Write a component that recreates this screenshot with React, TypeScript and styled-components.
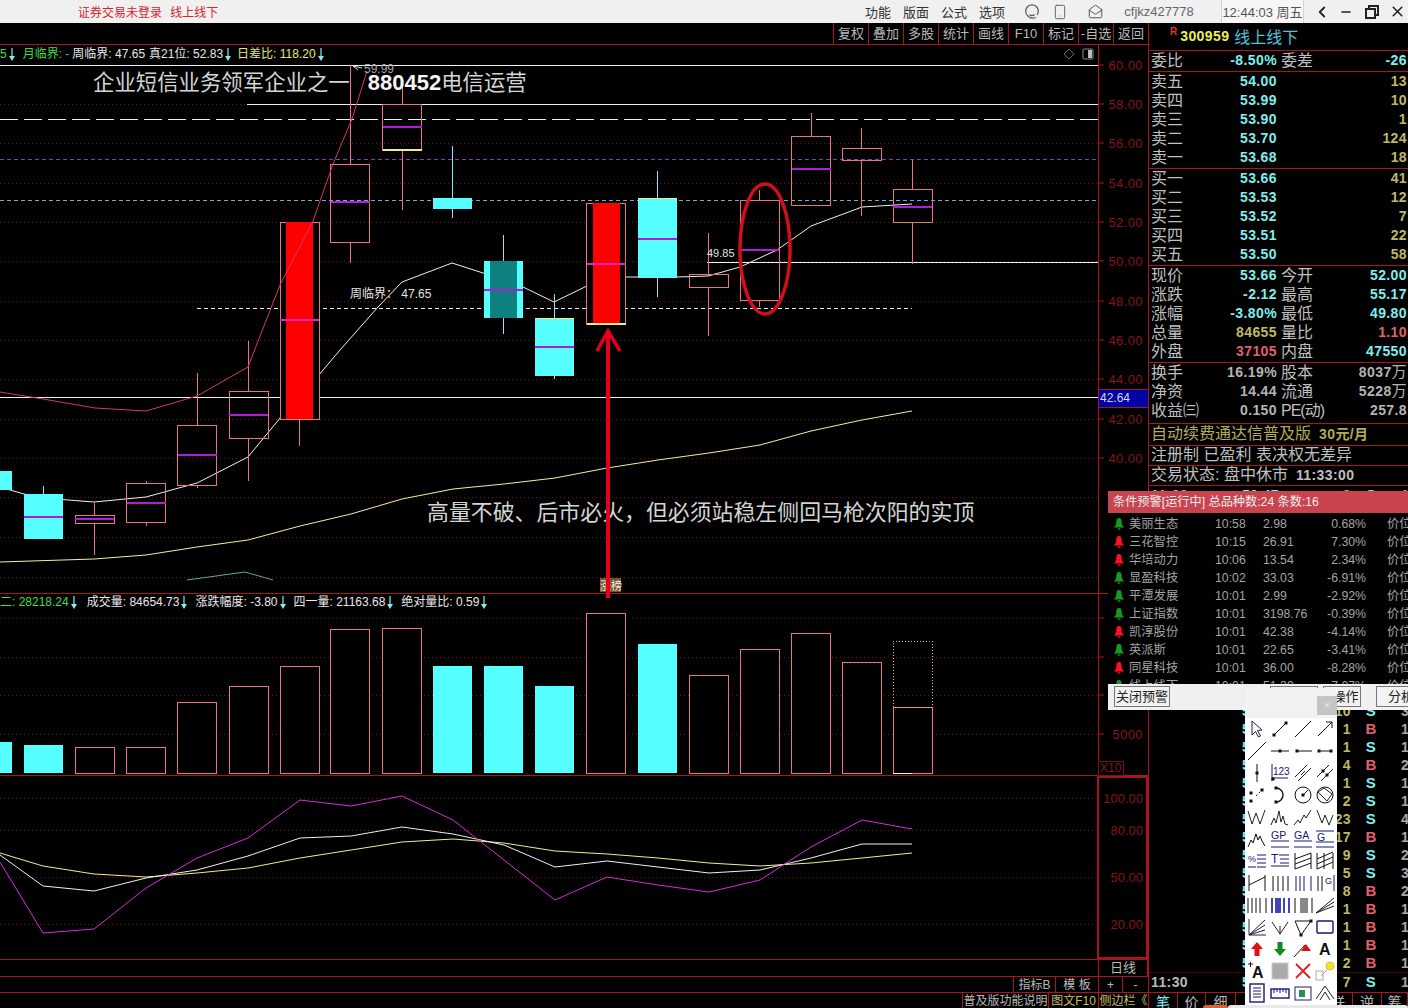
import React from "react";
import styled, { createGlobalStyle } from "styled-components";
import { ChevronLeft, Minus, X, Smartphone, MailOpen } from "lucide-react";

const FONT = `"Liberation Sans", "Noto Sans CJK SC", sans-serif`;
const LINE = "#a8141f";
const GRID = "#74121a";
const PINK = "#e8747e";
const CYAN = "#55ffff";
const QUOTE_CYAN = "#7eeeee";
const QTY = "#bdb965";
const SOFT_RED = "#e4606e";
const GRAY = "#b4b4b4";

const GlobalStyle = createGlobalStyle`
  html, body { margin: 0; background: #000; overflow: hidden; }
  * { box-sizing: border-box; }
`;

/* ---------- data ---------- */

type Candle = {
  x: number;
  top: number;
  bottom: number;
  hi: number;
  lo: number;
  mid?: number;
  kind: "up" | "down" | "teal" | "red";
  edge?: "top" | "bottom";
};

const candles: Candle[] = [
  { x: -8, top: 471, bottom: 490, hi: 471, lo: 490, kind: "down" },
  { x: 43.5, top: 494, bottom: 539, hi: 486, lo: 539, mid: 517, kind: "down" },
  { x: 94.5, top: 515, bottom: 523, hi: 503, lo: 555, mid: 519, kind: "up" },
  { x: 146, top: 483, bottom: 522, hi: 481, lo: 526, mid: 503, kind: "up" },
  { x: 197, top: 425, bottom: 485, hi: 373, lo: 488, mid: 455, kind: "up" },
  { x: 248.5, top: 391, bottom: 438, hi: 341, lo: 481, mid: 415, kind: "up" },
  { x: 299.5, top: 222, bottom: 419, hi: 222, lo: 446, mid: 320, kind: "red" },
  { x: 350, top: 164, bottom: 242, hi: 65, lo: 263, mid: 202, kind: "up" },
  { x: 402, top: 104, bottom: 150, hi: 80, lo: 210, mid: 127, kind: "up", edge: "bottom" },
  { x: 452.5, top: 198, bottom: 209, hi: 146, lo: 218, kind: "down" },
  { x: 503.5, top: 261, bottom: 318, hi: 235, lo: 334, mid: 290, kind: "teal" },
  { x: 554.5, top: 318, bottom: 376, hi: 294, lo: 379, mid: 347, kind: "down", edge: "top" },
  { x: 606, top: 203, bottom: 324, hi: 203, lo: 324, mid: 264, kind: "red", edge: "bottom" },
  { x: 657.5, top: 198, bottom: 278, hi: 171, lo: 297, mid: 239, kind: "down", edge: "top" },
  { x: 708.5, top: 274, bottom: 287, hi: 233, lo: 336, kind: "up" },
  { x: 759.5, top: 200, bottom: 300, hi: 190, lo: 307, mid: 250, kind: "up" },
  { x: 811, top: 136, bottom: 205, hi: 113, lo: 205, mid: 169, kind: "up" },
  { x: 861.5, top: 148, bottom: 160, hi: 128, lo: 216, kind: "up" },
  { x: 912.5, top: 189, bottom: 222, hi: 160, lo: 264, mid: 207, kind: "up" },
];

const whiteMa =
  "0,487 24,494 43,498 94,502 146,497 197,483 248,457 285,412 313,382 340,350 378,307 402,282 452,263 483,273 523,287 554,302 593,283 620,277 677,277 708,276 740,267 777,250 811,226 862,207 912,204";
const pinkMa =
  "0,392 43,399 95,408 146,411 197,396 248,367 280,285 313,221 333,164 352,119 367,71";
const yellowMa =
  "0,562 94,559 146,555 197,547 248,540 300,526 351,514 402,499 453,489 504,484 555,478 607,468 658,460 709,453 760,445 811,431 862,420 912,411";

const priceLabels = [
  ["60.00", 65],
  ["58.00", 104],
  ["56.00", 143],
  ["54.00", 183],
  ["52.00", 222],
  ["50.00", 261],
  ["48.00", 301],
  ["46.00", 340],
  ["44.00", 379],
  ["42.00", 419],
  ["40.00", 458],
] as const;

const volBars = [
  { x: -8, top: 742, fill: true },
  { x: 43.5, top: 745, fill: true },
  { x: 94.5, top: 747 },
  { x: 146, top: 747 },
  { x: 197, top: 702 },
  { x: 248.5, top: 686 },
  { x: 299.5, top: 666 },
  { x: 350, top: 629 },
  { x: 402, top: 628 },
  { x: 452.5, top: 666, fill: true },
  { x: 503.5, top: 666, fill: true },
  { x: 554.5, top: 686, fill: true },
  { x: 606, top: 613 },
  { x: 657.5, top: 644, fill: true },
  { x: 708.5, top: 675 },
  { x: 759.5, top: 649 },
  { x: 811, top: 633 },
  { x: 861.5, top: 662 },
  { x: 912.5, top: 707 },
];

const kdjMagenta =
  "0,862 43,933 94,929 146,888 197,858 248,838 300,800 351,806 402,796 453,820 504,860 555,900 607,877 658,885 709,892 760,880 811,847 862,820 912,829";
const kdjWhite =
  "0,855 43,886 94,891 146,878 197,870 248,856 300,838 351,836 402,827 453,834 504,845 555,867 607,861 658,867 709,873 760,870 811,858 862,844 912,844";
const kdjYellow =
  "0,853 43,866 94,874 146,877 197,873 248,868 300,858 351,850 402,842 453,839 504,843 555,851 607,854 658,858 709,863 760,866 811,863 862,858 912,853";

const sellRows = [
  ["卖五", "54.00", "13"],
  ["卖四", "53.99", "10"],
  ["卖三", "53.90", "1"],
  ["卖二", "53.70", "124"],
  ["卖一", "53.68", "18"],
];
const buyRows = [
  ["买一", "53.66", "41"],
  ["买二", "53.53", "12"],
  ["买三", "53.52", "7"],
  ["买四", "53.51", "22"],
  ["买五", "53.50", "58"],
];

const alerts = [
  ["美丽生态", "10:58", "2.98", "0.68%", "g"],
  ["三花智控", "10:15", "26.91", "7.30%", "r"],
  ["华培动力", "10:06", "13.54", "2.34%", "r"],
  ["显盈科技", "10:02", "33.03", "-6.91%", "g"],
  ["平潭发展", "10:01", "2.99", "-2.92%", "g"],
  ["上证指数", "10:01", "3198.76", "-0.39%", "g"],
  ["凯淳股份", "10:01", "42.38", "-4.14%", "r"],
  ["英派斯", "10:01", "22.65", "-3.41%", "g"],
  ["同星科技", "10:01", "36.00", "-8.28%", "r"],
  ["线上线下", "10:01", "51.39", "-7.07%", "g"],
];

const ticks: [string, "B" | "S", string][] = [
  ["8", "S", "1"], ["3", "B", "1"], ["5", "S", "2"], ["2", "B", "1"],
  ["9", "S", "1"], ["1", "B", "1"], ["4", "S", "2"], ["6", "B", "1"],
  ["2", "S", "1"], ["7", "B", "3"], ["1", "S", "1"], ["3", "S", "2"],
  ["10", "S", "3"], ["1", "B", "1"], ["1", "S", "1"], ["4", "B", "2"],
  ["1", "S", "1"], ["2", "S", "1"], ["23", "S", "4"], ["17", "B", "1"],
  ["9", "S", "2"], ["5", "S", "3"], ["8", "B", "2"], ["1", "B", "1"],
  ["1", "B", "1"], ["1", "B", "1"], ["2", "B", "1"], ["7", "S", "1"],
];

/* ---------- toolbox icons ---------- */

const dot = (x: number, y: number) => (
  <rect x={x - 1.5} y={y - 1.5} width={3} height={3} fill="#111" stroke="none" />
);

const label = (x: number, y: number, t: string, size = 10.5) => (
  <text x={x} y={y} fontSize={size} fill="#16167a" stroke="none">
    {t}
  </text>
);

const toolIcons: React.ReactNode[] = [
  <path d="M5 2V16L8.5 12.5 11.5 18 13.5 17 10.5 11.5 15 11Z" stroke="#223" />,
  <><path d="M4 16L16 4" stroke="#111" />{dot(4, 16)}{dot(16, 4)}</>,
  <path d="M2 18L18 2" stroke="#111" />,
  <path d="M3 17L17 3M11 3H17V9" stroke="#111" />,
  <path d="M1 19L19 1" stroke="#111" />,
  <><path d="M1 10H19" stroke="#111" />{dot(10, 10)}</>,
  <><path d="M3 10H19" stroke="#111" />{dot(4, 10)}</>,
  <><path d="M3 10H17" stroke="#111" />{dot(4, 10)}{dot(16, 10)}</>,
  <><path d="M10 1V19" stroke="#111" />{dot(10, 10)}</>,
  <><path d="M2 15H18M2 1V18" />{label(3, 12, "123", 10)}{dot(3, 16)}</>,
  <path d="M2 14L14 2M5 18L18 5M8 12L12 8" stroke="#222" />,
  <><path d="M2 14L14 2M6 18L18 6" stroke="#222" />{dot(8, 8)}{dot(12, 12)}</>,
  <><path d="M9 11L17 3" stroke="#111" strokeDasharray="2 2" />{dot(4, 16)}{dot(15, 5)}{dot(4, 8)}</>,
  <><path d="M6 3A7 7 0 0 1 6 17" stroke="#111" strokeWidth={1.4} />{dot(6, 3)}{dot(6, 17)}</>,
  <><circle cx={10} cy={10} r={8} stroke="#111" /><path d="M10 10L15 5" stroke="#111" />{dot(10, 10)}</>,
  <><circle cx={10} cy={10} r={8} stroke="#111" /><path d="M3 7L9 3 17 9 12 16Z" stroke="#224" /></>,
  <path d="M1 4L5 17 9 6 13 17 18 3" stroke="#222" />,
  <path d="M1 18L4 11 6 16 9 4 11 15 13 9 15 17 18 18" stroke="#222" />,
  <path d="M1 18L5 13 7 16 11 8 13 11 18 3" stroke="#222" />,
  <path d="M2 3L7 16 10 8 14 18 18 8" stroke="#222" />,
  <path d="M1 18L4 11 6 14 9 5 11 11 13 7 15 12 18 17" stroke="#111" />,
  <><path d="M1 12H19M1 18H19" />{label(1, 10, "GP")}</>,
  <><path d="M1 12H19M1 18H19" />{label(1, 10, "GA")}</>,
  <><path d="M1 13H19M1 18H19M1 2H19" />{label(2, 12, "G")}</>,
  <><path d="M10 4H19M10 8H19M10 12H19M10 16H19M1 16H9" />{label(1, 11, "%", 9)}</>,
  <><path d="M9 4H19M10 8H19M10 12H19M1 15H19" />{label(1, 12, "T", 12)}</>,
  <path d="M2 2V18M18 2V18M2 8L18 2M2 13L18 7M2 18L18 12" stroke="#111" />,
  <path d="M2 2V18M9 2V18M18 2V18M2 8L18 1M2 13L18 6M2 18L18 11" stroke="#111" />,
  <path d="M2 2V18M18 2V18M2 12L18 4" stroke="#111" />,
  <path d="M3 3V18M8 3V18M13 3V18M18 3V18" stroke="#111" />,
  <path d="M3 3V18M7 3V18M11 3V18M18 3V18" />,
  <><path d="M3 3V18M7 3V18" stroke="#111" />{label(10, 11, "G", 9)}<path d="M19 2V18" /></>,
  <path d="M1 3V18M5 3V18M9 3V18M13 3V18M19 3V18" stroke="#111" />,
  <path d="M2 3V18M6 3V18M8 3V18M10 3V18M14 3V18M19 3V18" stroke="#1616a8" strokeWidth={1.6} />,
  <path d="M2 3V18M8 3V18M10 3V18M12 3V18M14 3V18M19 3V18" stroke="#111" />,
  <path d="M1 18L19 3M1 18L19 7M1 18L19 11" stroke="#223" />,
  <path d="M2 2V18H19M2 18L18 3M2 18L18 8M2 18L18 13" stroke="#224" />,
  <path d="M10 17L2 5M10 17L18 5M10 17V9" stroke="#222" />,
  <><path d="M2 4H18L8 18Z" stroke="#111" />{dot(18, 4)}{dot(8, 18)}</>,
  <rect x={2} y={4} width={16} height={12} rx={1} stroke="#16167a" strokeWidth={1.4} />,
  <path d="M10 3L16 10H12.5V17H7.5V10H4Z" fill="#e01010" stroke="none" />,
  <path d="M10 17L16 10H12.5V3H7.5V10H4Z" fill="#108a20" stroke="none" />,
  <><path d="M1 18L12 6" stroke="#111" /><path d="M13 5L18 12H8Z" fill="#e01010" stroke="none" /></>,
  <text x={4} y={16} fontSize={16} fontWeight={700} fill="#111" stroke="none">A</text>,
  <><text x={5} y={17} fontSize={16} fontWeight={700} fill="#111" stroke="none">A</text><path d="M1 3H6M3.5 1V6" stroke="#111" /></>,
  <><rect x={2} y={2} width={16} height={16} fill="#aaa" stroke="#ccc" /><rect x={4} y={4} width={12} height={12} fill="#aaa" stroke="none" /></>,
  <path d="M3 3L17 17M17 3L3 17" stroke="#e02020" strokeWidth={1.8} />,
  <><rect x={1} y={10} width={7} height={9} stroke="#aaa" /><path d="M6 15L13 8" stroke="#aaa" /><circle cx={15} cy={5} r={4} fill="#f4e03a" stroke="#dcc020" /></>,
  <><rect x={3} y={1} width={14} height={18} stroke="#16167a" strokeWidth={1.4} /><path d="M6 5H14M6 8H14M6 11H14M6 14H14" /></>,
  <><rect x={1} y={6} width={18} height={9} stroke="#16167a" strokeWidth={1.4} /><path d="M4 6V10M7 6V9M10 6V10M13 6V9M16 6V10" /></>,
  <><rect x={2} y={4} width={16} height={13} stroke="#226" /><rect x={6} y={7} width={6} height={7} fill="#2a8a5a" stroke="none" /></>,
  <path d="M1 16L10 3 19 16M5 17L10 9 15 17" stroke="#222" />,
];

/* ---------- layout ---------- */

const Page = styled.div`
  position: relative;
  width: 1408px;
  height: 1008px;
  overflow: hidden;
  background: #000;
  font-family: ${FONT};
`;

const TitleBar = styled.header`
  display: flex;
  align-items: center;
  height: 23px;
  background: #f0f0f0;
  color: #444;
  font-size: 13px;
`;

const AppTitle = styled.span`
  margin-left: 78px;
  color: #d8242c;
  font-size: 12px;
  word-spacing: 5px;
  margin-right: auto;
`;

const MenuGroup = styled.div`
  display: flex;
  margin-right: 7px;
`;

const MenuItem = styled.span`
  width: 38px;
  text-align: center;
  color: #333;
`;

const BarButton = styled.span<{ $w: number }>`
  display: flex;
  align-items: center;
  justify-content: center;
  width: ${(p) => p.$w}px;
  height: 100%;
  color: #444;
`;

const UserName = styled.span`
  width: 106px;
  padding-right: 18px;
  text-align: center;
  color: #666;
  font-size: 13px;
`;

const Clock = styled.span`
  display: flex;
  align-items: center;
  justify-content: center;
  width: 83px;
  height: 100%;
  background: #f6f6f6;
  border-left: 1px solid #d4d4d4;
  border-right: 1px solid #d4d4d4;
  color: #555;
  white-space: nowrap;
  margin-right: 6px;
`;

const Body = styled.div`
  display: grid;
  grid-template-columns: 1148px 260px;
  height: 985px;
`;

const LeftColumn = styled.section`
  display: flex;
  flex-direction: column;
  min-width: 0;
`;

const Toolbar = styled.nav`
  display: flex;
  justify-content: flex-end;
  height: 22px;
  border-bottom: 1px solid ${LINE};
`;

const ToolButton = styled.span`
  width: 35px;
  border-left: 1px solid ${LINE};
  color: #b9b9b9;
  font-size: 13px;
  line-height: 21px;
  text-align: center;
  white-space: nowrap;
`;

const Pane = styled.div<{ $h: number }>`
  position: relative;
  height: ${(p) => p.$h}px;
  overflow: hidden;
`;

const ChartSvg = styled.svg`
  display: block;
  font-family: ${FONT};
`;

const Legend = styled.div`
  position: absolute;
  top: 1px;
  left: 0;
  display: flex;
  gap: 6px;
  height: 16px;
  line-height: 16px;
  font-size: 12px;
  color: #e8e8e8;
  white-space: nowrap;
`;

const LegendItem = styled.span<{ $color?: string; $push?: number }>`
  color: ${(p) => p.$color ?? "#e8e8e8"};
  margin-left: ${(p) => p.$push ?? 0}px;
`;

const DownMark = styled.svg`
  display: inline-block;
  width: 10px;
  height: 13px;
  margin-bottom: -3px;
`;

const TimeRow = styled.div`
  display: flex;
  justify-content: flex-end;
  height: 17px;
  border-top: 1px solid ${LINE};
`;

const ControlRow = styled(TimeRow)`
  height: 16px;
`;

const FootRow = styled(TimeRow)`
  height: 16px;
`;

const FootCell = styled.span<{ $w: number; $tone?: "gold" }>`
  width: ${(p) => p.$w}px;
  border-left: 1px solid ${LINE};
  color: ${(p) => (p.$tone === "gold" ? "#c4bc62" : "#b9b9b9")};
  font-size: 12px;
  line-height: 16px;
  text-align: center;
  white-space: nowrap;
  overflow: hidden;
`;

const AxisCell = styled(FootCell)`
  border-right: 1px solid ${LINE};
  font-size: 13px;
`;

/* ---------- right column ---------- */

const RightColumn = styled.aside`
  display: flex;
  flex-direction: column;
  border-left: 1px solid ${LINE};
  min-width: 0;
`;

const StockHead = styled.div`
  display: flex;
  align-items: center;
  height: 28px;
  padding: 0 0 2px 21px;
  border-bottom: 1px solid ${LINE};
`;

const Badge = styled.sup`
  color: #e03030;
  font-size: 10px;
  font-weight: 700;
  margin: -8px 3px 0 0;
  line-height: 1;
`;

const StockCode = styled.span`
  color: #eded5a;
  font-size: 14px;
  font-weight: 700;
  letter-spacing: 0.4px;
  margin-right: 5px;
`;

const StockName = styled.span`
  color: #52c4dc;
  font-size: 16px;
`;

const QuoteBlock = styled.div<{ $pb?: number }>`
  padding: 1px 0 ${(p) => p.$pb ?? 0}px 0;
  border-bottom: 1px solid ${LINE};
`;

const QuoteRow = styled.div`
  display: grid;
  grid-template-columns: 126px 126px;
  grid-template-rows: 19px;
  column-gap: 4px;
  height: 19px;
  padding-left: 2px;
`;

const QuoteHalf = styled.div`
  display: flex;
  justify-content: space-between;
  align-items: center;
  height: 19px;
  padding-bottom: 3px;
  white-space: nowrap;
  min-width: 0;
`;

const QuoteLabel = styled.span<{ $tight?: boolean }>`
  color: #bfbfbf;
  font-size: 16px;
  line-height: 16px;
  margin-top: 1px;
  letter-spacing: ${(p) => (p.$tight ? "-1px" : "0")};
`;

const QuoteValue = styled.span<{ $color?: string }>`
  color: ${(p) => p.$color ?? QUOTE_CYAN};
  font-size: 14px;
  line-height: 16px;
  font-weight: 700;
  letter-spacing: 0.4px;
`;

const Unit = styled.span`
  font-size: 15px;
  font-weight: 400;
`;

const NoticeRow = styled.div<{ $h: number; $tone?: "gold" }>`
  display: flex;
  align-items: center;
  gap: 8px;
  height: ${(p) => p.$h}px;
  padding: 0 0 2px 2px;
  border-bottom: 1px solid ${LINE};
  color: ${(p) => (p.$tone === "gold" ? "#b4aa58" : "#bfbfbf")};
  font-size: 16px;
  line-height: 16px;
  white-space: nowrap;
`;

const NoticeStrong = styled.b`
  font-size: 14px;
  letter-spacing: 0.4px;
`;

const TickList = styled.div`
  flex: 1;
  min-height: 0;
  overflow: hidden;
`;

const TickRow = styled.div<{ $rule?: boolean }>`
  display: grid;
  grid-template-columns: 91px 60px 49px 40px 1fr;
  grid-template-rows: 17px;
  align-items: center;
  height: 18px;
  padding-left: 2px;
  font-size: 14px;
  line-height: 16px;
  font-weight: 700;
  letter-spacing: 0.4px;
  border-top: ${(p) => (p.$rule ? `1px dotted ${GRID}` : "0")};
`;

const TickTime = styled.span`
  color: #b9b9b9;
`;

const TickPrice = styled.span`
  color: ${QUOTE_CYAN};
`;

const TickVol = styled.span`
  color: ${QTY};
  text-align: right;
`;

const TickFlag = styled.span<{ $side: "B" | "S" }>`
  color: ${(p) => (p.$side === "B" ? SOFT_RED : QUOTE_CYAN)};
  text-align: center;
  font-size: 15px;
`;

const TickLast = styled.span`
  color: #a6a6a6;
  padding-left: 10px;
`;

const TabBar = styled.div`
  display: flex;
  height: 16px;
  border-top: 1px solid ${LINE};
`;

const Tab = styled.span<{ $active?: boolean; $w: number }>`
  width: ${(p) => p.$w}px;
  border-right: 1px solid ${LINE};
  color: ${(p) => (p.$active ? QUOTE_CYAN : "#b9b9b9")};
  font-size: 14px;
  line-height: 18px;
  text-align: center;
  overflow: hidden;
`;

/* ---------- things lying over the page ---------- */

const Overlay = styled.svg`
  position: absolute;
  inset: 0;
  pointer-events: none;
`;

const Caption = styled.div<{ $x: number; $y: number; $size: number }>`
  position: absolute;
  left: ${(p) => p.$x}px;
  top: ${(p) => p.$y}px;
  color: #d4d4d4;
  font-size: ${(p) => p.$size}px;
  line-height: 26px;
  white-space: nowrap;
  font-family: "Noto Sans CJK SC", sans-serif;
`;

const CaptionCode = styled.b`
  color: #f4f4f4;
  font-family: "Liberation Sans", sans-serif;
  font-size: 22px;
  margin: 0 0 0 18px;
`;

const AlertDialog = styled.div`
  position: absolute;
  left: 1108px;
  top: 491px;
  width: 300px;
  height: 219px;
  display: flex;
  flex-direction: column;
  background: #000;
  overflow: hidden;
`;

const AlertHead = styled.div`
  flex: none;
  height: 22px;
  padding-left: 5px;
  background: #c8444f;
  color: #ececec;
  font-size: 12.2px;
  line-height: 22px;
  white-space: nowrap;
`;

const AlertBody = styled.div`
  flex: 1;
  min-height: 0;
  padding-top: 2px;
  overflow: hidden;
`;

const AlertRow = styled.div`
  display: grid;
  grid-template-columns: 16px 86px 48px 58px 45px 1fr;
  grid-template-rows: 18px;
  align-items: center;
  height: 18px;
  padding-left: 5px;
  color: #a4a4a4;
  font-size: 12.3px;
  line-height: 16px;
  white-space: nowrap;
`;

const AlertPct = styled.span`
  text-align: right;
`;

const AlertKind = styled.span`
  padding-left: 21px;
`;

const AlertFoot = styled.div`
  position: relative;
  flex: none;
  height: 26px;
  background: #f0f0f0;
`;

const DialogButton = styled.span<{ $x: number; $w: number; $indent?: number }>`
  position: absolute;
  left: ${(p) => p.$x}px;
  top: 2px;
  width: ${(p) => p.$w}px;
  height: 21px;
  padding-left: ${(p) => p.$indent ?? 0}px;
  border: 1px solid #777;
  background: #f2f2f2;
  color: #222;
  font-size: 13px;
  line-height: 19px;
  text-align: center;
  white-space: nowrap;
  overflow: hidden;
`;

const Toolbox = styled.div`
  position: absolute;
  left: 1245px;
  top: 688px;
  width: 92px;
  height: 318px;
  background: #fff;
`;

const ToolboxHead = styled.div`
  display: flex;
  justify-content: flex-end;
  align-items: flex-start;
  height: 30px;
  padding-top: 8px;
  background: #f2f2f2;
`;

const CloseBox = styled.span`
  width: 20px;
  height: 19px;
  background: #c4c4c4;
  color: #e8e8e8;
  font-size: 11px;
  line-height: 19px;
  text-align: center;
`;

const ToolGrid = styled.div`
  display: grid;
  grid-template-columns: repeat(4, 22.7px);
  grid-auto-rows: 22px;
  justify-items: center;
  align-items: center;
  padding-left: 1px;
`;

const ToolIcon = styled.svg`
  width: 20px;
  height: 20px;
  fill: none;
  stroke: #16167a;
  stroke-width: 1;
  font-family: "Liberation Sans", sans-serif;
`;

const TrayEdge = styled.span`
  position: absolute;
  left: 1228px;
  top: 1005px;
  width: 180px;
  height: 3px;
  background: #e9e9e9;
  border-radius: 4px 4px 0 0;
`;

const TrayTab = styled.span`
  position: absolute;
  left: 1203px;
  top: 1005px;
  width: 25px;
  height: 3px;
  background: #d8632e;
  border-radius: 3px 3px 0 0;
`;

/* ---------- pieces ---------- */

const Down = () => (
  <DownMark viewBox="0 0 10 13">
    <path d="M5 0V10" stroke={QUOTE_CYAN} strokeWidth={1.2} />
    <path d="M2 8H8L5 13Z" fill={QUOTE_CYAN} />
  </DownMark>
);

const BellIcon = ({ tone }: { tone: string }) => (
  <svg width="12" height="14" viewBox="0 0 12 13">
    <path
      d="M6 .5C4 .5 3.4 2 3.4 4 3.4 7 2.5 8.4 .8 10H11.2C9.5 8.4 8.6 7 8.6 4 8.6 2 8 .5 6 .5ZM4.5 10.8a1.5 1.5 0 0 0 3 0Z"
      fill={tone === "r" ? "#ff1020" : "#189a1c"}
    />
  </svg>
);

const RingIcon = () => (
  <svg width="18" height="18" viewBox="0 0 18 18" fill="none" stroke="#555" strokeWidth="1.2">
    <path d="M4 12A6.3 6.3 0 1 1 14 12" />
    <path d="M4 12C6 15 10 15.5 13 14.5" />
    <path d="M6.5 11.5A3.5 3.5 0 0 0 11.5 11.5" />
  </svg>
);

const RestoreIcon = () => (
  <svg width="14" height="14" viewBox="0 0 14 14" fill="none" stroke="#222" strokeWidth="2">
    <rect x="1" y="4" width="9" height="9" />
    <path d="M4 3V1H13V10H11" />
  </svg>
);

const CandleMark = ({ c }: { c: Candle }) => {
  const left = c.x - 19.5;
  const filled = c.kind === "down" || c.kind === "teal";
  const wick = filled ? "#9df" : PINK;
  const edgeY = c.edge === "top" ? c.top : c.bottom;
  return (
    <g shapeRendering="crispEdges">
      <line x1={c.x} x2={c.x} y1={c.hi} y2={c.top} stroke={wick} />
      <line x1={c.x} x2={c.x} y1={c.bottom} y2={c.lo} stroke={wick} />
      {filled && <rect x={left} y={c.top} width={39} height={c.bottom - c.top} fill={CYAN} />}
      {c.kind === "teal" && (
        <rect x={left + 6} y={c.top} width={27} height={c.bottom - c.top} fill="#0d8080" />
      )}
      {c.kind === "up" && (
        <rect x={left} y={c.top} width={39} height={c.bottom - c.top} fill="#000" fillOpacity={0} stroke={PINK} />
      )}
      {c.kind === "red" && (
        <>
          <rect x={left} y={c.top} width={39} height={c.bottom - c.top} fill="#000" stroke={PINK} />
          <rect x={left + 6} y={c.top} width={27} height={c.bottom - c.top} fill="#ff0000" />
        </>
      )}
      {c.mid && (
        <line x1={left} x2={left + 39} y1={c.mid} y2={c.mid} stroke={c.kind === "red" ? "#e820c8" : "#b01cd8"} strokeWidth={1.4} />
      )}
      {c.edge && (
        <line x1={left} x2={left + 39} y1={edgeY} y2={edgeY} stroke="#f4ee80" strokeWidth={c.edge === "top" ? 1 : 2} />
      )}
    </g>
  );
};

const GridLine = ({ y, from = 0 }: { y: number; from?: number }) => (
  <line x1={from} x2={1098} y1={y} y2={y} stroke={GRID} strokeDasharray="1 3" shapeRendering="crispEdges" />
);

const AxisText = ({ y, children }: { y: number; children: string }) => (
  <>
    <line x1={1098} x2={1104} y1={y} y2={y} stroke={LINE} />
    <text x={1143} y={y + 5} textAnchor="end" fontSize={13} fill="#86141c" letterSpacing={0.4}>
      {children}
    </text>
  </>
);

const MainChart = () => (
  <ChartSvg width={1148} height={548} viewBox="0 45 1148 548">
    {priceLabels.map(([t, y]) => (
      <GridLine key={t} y={y} />
    ))}
    <GridLine y={497} />
    <GridLine y={537} />
    <GridLine y={577} />
    <g shapeRendering="crispEdges">
      <line x1={0} x2={1098} y1={65} y2={65} stroke="#f0f0f0" />
      <line x1={247} x2={1098} y1={104} y2={104} stroke="#f0f0f0" />
      <line x1={0} x2={1098} y1={119} y2={119} stroke="#f0f0f0" strokeDasharray="18 6" />
      <line x1={0} x2={1098} y1={159} y2={159} stroke="#8a3ac0" strokeDasharray="4 3" />
      <line x1={0} x2={1098} y1={200} y2={200} stroke="#7aa8d0" strokeDasharray="4 3" />
      <line x1={707} x2={1098} y1={262} y2={262} stroke="#f0f0f0" />
      <line x1={197} x2={912} y1={308} y2={308} stroke="#f0f0f0" strokeDasharray="4 3" />
      <line x1={0} x2={1098} y1={397} y2={397} stroke="#f0f0f0" />
    </g>
    <polyline points={yellowMa} fill="none" stroke="#f2f0a0" />
    <polyline points={whiteMa} fill="none" stroke="#f0f0f0" />
    <polyline points="187,580 245,572 273,580" fill="none" stroke="#5aa8a8" />
    {candles.map((c) => (
      <CandleMark key={c.x} c={c} />
    ))}
    <polyline points={pinkMa} fill="none" stroke="#d03a64" />
    <polyline points="358,70 353,66 362,68" fill="none" stroke="#ddd" />
    <text x={364} y={73} fontSize={12} fill="#aaa">59.99</text>
    <text x={350} y={298} fontSize={12} fill="#e4e4e4">周临界： 47.65</text>
    <text x={707} y={257} fontSize={11} fill="#e4e4e4">49.85</text>
    <path d="M1069 49L1074 54 1069 59 1064 54Z" fill="none" stroke="#666" />
    <rect x={1083} y={49} width={10} height={10} rx={1} fill="none" stroke="#888" />
    <rect x={1088} y={50} width={4} height={8} fill="#bbb" />
    <g shapeRendering="crispEdges">
      <line x1={1098} x2={1098} y1={45} y2={593} stroke={LINE} />
      <rect x={1098} y={389} width={50} height={18} fill="#0000a8" stroke={LINE} />
    </g>
    {priceLabels.map(([t, y]) => (
      <AxisText key={t} y={y}>{t}</AxisText>
    ))}
    <text x={1100} y={402} fontSize={12} fill="#d8d8f0">42.64</text>
    <rect x={600} y={578} width={21} height={14} fill="#7a5424" />
    <text x={600} y={590} fontSize={11} fill="#eee">涨榜</text>
  </ChartSvg>
);

const VolumeChart = () => (
  <ChartSvg width={1148} height={183} viewBox="0 593 1148 183">
    <GridLine y={618} />
    <GridLine y={657} />
    <GridLine y={695} />
    <GridLine y={734} />
    <g shapeRendering="crispEdges">
      {volBars.map((b) =>
        b.fill ? (
          <rect key={b.x} x={b.x - 19.5} y={b.top} width={39} height={773 - b.top} fill={CYAN} />
        ) : (
          <rect key={b.x} x={b.x - 19.5} y={b.top} width={39} height={773 - b.top} fill="#000" stroke={PINK} />
        ),
      )}
      <line x1={893} x2={912} y1={773} y2={773} stroke="#f0f0f0" />
      <rect x={893} y={641} width={39} height={66} fill="none" stroke="#d8c080" strokeDasharray="1 2" />
      <line x1={0} x2={1148} y1={593.5} y2={593.5} stroke={LINE} />
      <line x1={1098} x2={1098} y1={593} y2={776} stroke={LINE} />
      <line x1={0} x2={1148} y1={775.5} y2={775.5} stroke={LINE} />
      <rect x={1098} y={761} width={25} height={14} fill="none" stroke={GRID} />
    </g>
    <AxisText y={618}>{""}</AxisText>
    <AxisText y={657}>{""}</AxisText>
    <AxisText y={695}>{""}</AxisText>
    <AxisText y={734}>5000</AxisText>
    <text x={1100} y={772} fontSize={12} fill="#86141c">X10</text>
  </ChartSvg>
);

const KdjChart = () => (
  <ChartSvg width={1148} height={183} viewBox="0 776 1148 183">
    <GridLine y={798} />
    <GridLine y={830} />
    <GridLine y={877} />
    <GridLine y={924} />
    <polyline points={kdjYellow} fill="none" stroke="#eeee90" />
    <polyline points={kdjWhite} fill="none" stroke="#f0f0f0" />
    <polyline points={kdjMagenta} fill="none" stroke="#d030d8" />
    <rect x={1098} y={777} width={49} height={181} fill="none" stroke={LINE} strokeWidth={2} shapeRendering="crispEdges" />
    <text x={1143} y={803} textAnchor="end" fontSize={13} fill="#86141c">100.00</text>
    <text x={1143} y={835} textAnchor="end" fontSize={13} fill="#86141c">80.00</text>
    <text x={1143} y={882} textAnchor="end" fontSize={13} fill="#86141c">50.00</text>
    <text x={1143} y={929} textAnchor="end" fontSize={13} fill="#86141c">20.00</text>
  </ChartSvg>
);

const QuoteLine = ({
  a,
  av,
  ac,
  b,
  bv,
  bc,
  tight,
}: {
  a: string;
  av: React.ReactNode;
  ac?: string;
  b?: string;
  bv: React.ReactNode;
  bc?: string;
  tight?: boolean;
}) => (
  <QuoteRow>
    <QuoteHalf>
      <QuoteLabel>{a}</QuoteLabel>
      <QuoteValue $color={ac}>{av}</QuoteValue>
    </QuoteHalf>
    <QuoteHalf>
      <QuoteLabel $tight={tight}>{b}</QuoteLabel>
      <QuoteValue $color={bc}>{bv}</QuoteValue>
    </QuoteHalf>
  </QuoteRow>
);

export default function App() {
  return (
    <Page>
      <GlobalStyle />
      <TitleBar>
        <AppTitle>证券交易未登录 线上线下</AppTitle>
        <MenuGroup>
          <MenuItem>功能</MenuItem>
          <MenuItem>版面</MenuItem>
          <MenuItem>公式</MenuItem>
          <MenuItem>选项</MenuItem>
        </MenuGroup>
        <BarButton $w={27}><RingIcon /></BarButton>
        <BarButton $w={30}><Smartphone size={16} strokeWidth={1.2} /></BarButton>
        <BarButton $w={40}><MailOpen size={15} strokeWidth={1.4} /></BarButton>
        <UserName>cfjkz427778</UserName>
        <Clock>12:44:03 周五</Clock>
        <BarButton $w={24}><ChevronLeft size={18} strokeWidth={2.4} color="#222" /></BarButton>
        <BarButton $w={24}><Minus size={14} strokeWidth={2.6} color="#222" /></BarButton>
        <BarButton $w={28}><RestoreIcon /></BarButton>
        <BarButton $w={22}><X size={17} strokeWidth={2.2} color="#222" /></BarButton>
      </TitleBar>

      <Body>
        <LeftColumn>
          <Toolbar>
            {["复权", "叠加", "多股", "统计", "画线", "F10", "标记", "-自选", "返回"].map((t) => (
              <ToolButton key={t}>{t}</ToolButton>
            ))}
          </Toolbar>

          <Pane $h={548}>
            <MainChart />
            <Legend>
              <LegendItem $color="#44dd44">5<Down /></LegendItem>
              <LegendItem $color="#44dd44">月临界: -</LegendItem>
              <LegendItem $push={-3}>周临界: 47.65</LegendItem>
              <LegendItem $push={-2}>真21位: 52.83<Down /></LegendItem>
              <LegendItem $color="#e8e878" $push={-2}>日差比: 118.20<Down /></LegendItem>
            </Legend>
          </Pane>

          <Pane $h={183}>
            <VolumeChart />
            <Legend>
              <LegendItem $color="#44dd44">二: 28218.24<Down /></LegendItem>
              <LegendItem $push={2}>成交量: 84654.73<Down /></LegendItem>
              <LegendItem>涨跌幅度: -3.80<Down /></LegendItem>
              <LegendItem>四一量: 21163.68<Down /></LegendItem>
              <LegendItem>绝对量比: 0.59<Down /></LegendItem>
            </Legend>
          </Pane>

          <Pane $h={183}>
            <KdjChart />
          </Pane>

          <TimeRow>
            <AxisCell $w={50}>日线</AxisCell>
          </TimeRow>
          <ControlRow>
            <FootCell $w={42}>指标B</FootCell>
            <FootCell $w={43}>模 板</FootCell>
            <FootCell $w={24}>+</FootCell>
            <FootCell $w={26}>-</FootCell>
          </ControlRow>
          <FootRow>
            <FootCell $w={86}>普及版功能说明</FootCell>
            <FootCell $w={50} $tone="gold">图文F10</FootCell>
            <FootCell $w={50} $tone="gold">侧边栏《</FootCell>
          </FootRow>
        </LeftColumn>

        <RightColumn>
          <StockHead>
            <Badge>R</Badge>
            <StockCode>300959</StockCode>
            <StockName>线上线下</StockName>
          </StockHead>
          <QuoteBlock>
            <QuoteLine a="委比" av="-8.50%" b="委差" bv="-26" />
          </QuoteBlock>
          <QuoteBlock>
            {sellRows.map(([l, p, q]) => (
              <QuoteLine key={l} a={l} av={p} bv={q} bc={QTY} />
            ))}
          </QuoteBlock>
          <QuoteBlock>
            {buyRows.map(([l, p, q]) => (
              <QuoteLine key={l} a={l} av={p} bv={q} bc={QTY} />
            ))}
          </QuoteBlock>
          <QuoteBlock>
            <QuoteLine a="现价" av="53.66" b="今开" bv="52.00" />
            <QuoteLine a="涨跌" av="-2.12" b="最高" bv="55.17" />
            <QuoteLine a="涨幅" av="-3.80%" b="最低" bv="49.80" />
            <QuoteLine a="总量" av="84655" ac={QTY} b="量比" bv="1.10" bc={SOFT_RED} />
            <QuoteLine a="外盘" av="37105" ac={SOFT_RED} b="内盘" bv="47550" />
          </QuoteBlock>
          <QuoteBlock $pb={2}>
            <QuoteLine a="换手" av="16.19%" ac={GRAY} b="股本" bv={<>8037<Unit>万</Unit></>} bc={GRAY} />
            <QuoteLine a="净资" av="14.44" ac={GRAY} b="流通" bv={<>5228<Unit>万</Unit></>} bc={GRAY} />
            <QuoteLine a="收益㈢" av="0.150" ac={GRAY} b="PE(动)" tight bv="257.8" bc={GRAY} />
          </QuoteBlock>
          <NoticeRow $h={22} $tone="gold">
            自动续费通达信普及版 <NoticeStrong>30元/月</NoticeStrong>
          </NoticeRow>
          <NoticeRow $h={20}>注册制 已盈利 表决权无差异</NoticeRow>
          <NoticeRow $h={20}>
            交易状态: 盘中休市 <NoticeStrong>11:33:00</NoticeStrong>
          </NoticeRow>
          <TickList>
            {ticks.map(([v, f, l], i) => {
              const last = i === ticks.length - 1;
              return (
                <TickRow key={i} $rule={last}>
                  <TickTime>{i === 0 || last ? "11:30" : ""}</TickTime>
                  <TickPrice>53.47</TickPrice>
                  <TickVol>{v}</TickVol>
                  <TickFlag $side={f}>{f}</TickFlag>
                  <TickLast>{l}</TickLast>
                </TickRow>
              );
            })}
          </TickList>
          <TabBar>
            <Tab $w={29} $active>笔</Tab>
            <Tab $w={28}>价</Tab>
            <Tab $w={30}>细</Tab>
            <Tab $w={30}>主</Tab>
            <Tab $w={30}>分</Tab>
            <Tab $w={28}>势</Tab>
            <Tab $w={29}>联</Tab>
            <Tab $w={29}>逆</Tab>
            <Tab $w={26}>筹</Tab>
          </TabBar>
        </RightColumn>
      </Body>

      <Caption $x={93} $y={68} $size={21.4}>
        企业短信业务领军企业之一<CaptionCode>880452</CaptionCode>电信运营
      </Caption>
      <Caption $x={427} $y={498} $size={21.9}>
        高量不破、后市必火，但必须站稳左侧回马枪次阳的实顶
      </Caption>

      <Overlay width={1408} height={1008} viewBox="0 0 1408 1008">
        <ellipse cx={765} cy={249} rx={25} ry={65} fill="none" stroke="#d01018" strokeWidth={3.5} />
        <path d="M608 598V330" stroke="#e4001c" strokeWidth={4} fill="none" />
        <path d="M597 351L608 331 620 351" stroke="#e4001c" strokeWidth={3.5} fill="none" />
      </Overlay>

      <AlertDialog>
        <AlertHead>条件预警[运行中] 总品种数:24 条数:16</AlertHead>
        <AlertBody>
          {alerts.map(([name, time, price, pct, tone]) => (
            <AlertRow key={name}>
              <BellIcon tone={tone} />
              <span>{name}</span>
              <span>{time}</span>
              <span>{price}</span>
              <AlertPct>{pct}</AlertPct>
              <AlertKind>价位</AlertKind>
            </AlertRow>
          ))}
        </AlertBody>
        <AlertFoot>
          <DialogButton $x={6} $w={56}>关闭预警</DialogButton>
          <DialogButton $x={162} $w={48}>{""}</DialogButton>
          <DialogButton $x={215} $w={38} $indent={7}>操作</DialogButton>
          <DialogButton $x={268} $w={50}>分析</DialogButton>
        </AlertFoot>
      </AlertDialog>

      <Toolbox>
        <ToolboxHead>
          <CloseBox>×</CloseBox>
        </ToolboxHead>
        <ToolGrid>
          {toolIcons.map((icon, i) => (
            <ToolIcon key={i} viewBox="0 0 20 20">{icon}</ToolIcon>
          ))}
        </ToolGrid>
      </Toolbox>

      <TrayTab />
      <TrayEdge />
    </Page>
  );
}
